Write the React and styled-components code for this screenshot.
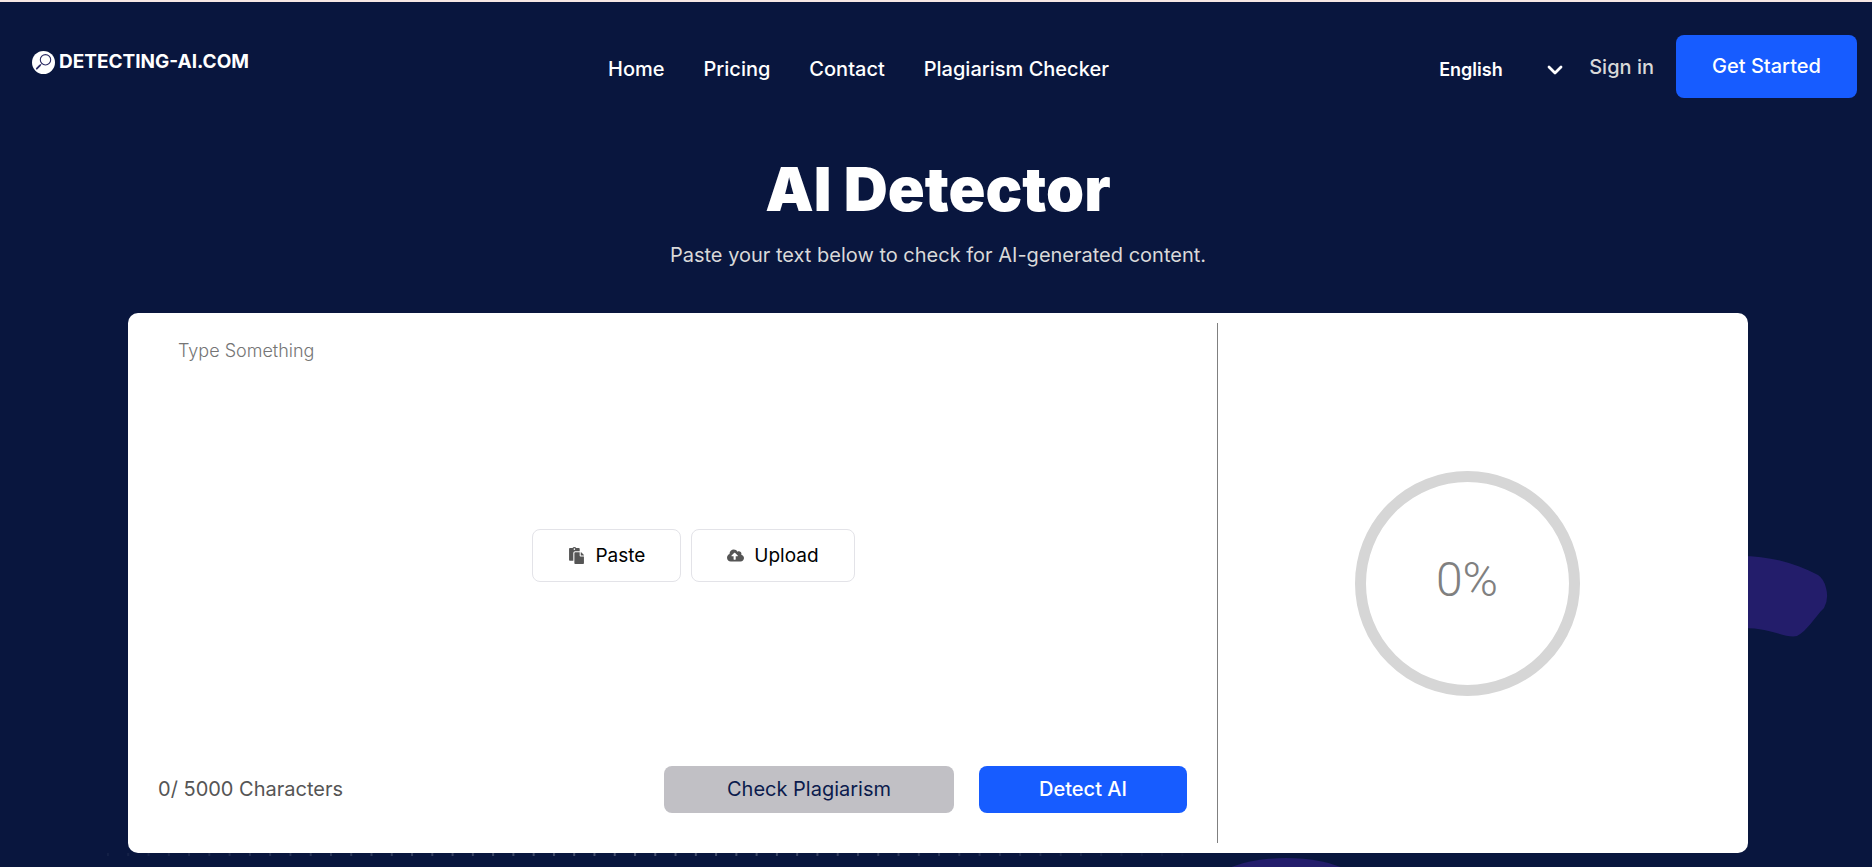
import React, { useState } from "react";
import styled, { createGlobalStyle } from "styled-components";
import { FaPaste, FaCloudUploadAlt } from "react-icons/fa";

const GlobalStyle = createGlobalStyle`
  *, *::before, *::after { box-sizing: border-box; }
  body {
    margin: 0;
    background: #09163e;
    font-family: Inter, "Liberation Sans", sans-serif;
    color: #fff;
  }
`;

const Page = styled.div`
  position: relative;
  min-height: 100vh;
  overflow: hidden;
  border-top: 2px solid #f6e7e4;
  background: #09163e;
`;

const Backdrop = styled.svg`
  position: absolute;
  top: 0;
  right: 0;
  width: 1872px;
  height: 865px;
`;

const Header = styled.header`
  position: relative;
  display: grid;
  grid-template-columns: 576px 1fr auto;
  align-items: start;
  padding: 33px 15px 0 32px;
  height: 96px;
`;

const Logo = styled.a`
  display: flex;
  align-items: center;
  gap: 4px;
  margin-top: 15px;
  justify-self: start;
  color: #fff;
  font-size: 19px;
  font-weight: 700;
  line-height: 24px;
  text-decoration: none;
  white-space: nowrap;
`;

const Nav = styled.nav`
  display: flex;
  gap: 39px;
  margin-top: 22px;
`;

const NavLink = styled.a`
  color: ${(p) => (p.$muted ? "#d9d9d9" : "#fff")};
  font-size: 20px;
  font-weight: 500;
  line-height: 24px;
  text-decoration: none;
  white-space: nowrap;
`;

const Account = styled.div`
  display: flex;
  align-items: center;
  gap: 22px;
`;

const Language = styled.label`
  display: flex;
  align-items: center;
  width: 124px;
  margin: 6px 4px 0 0;
`;

const LanguageSelect = styled.select`
  flex: 1;
  min-width: 0;
  padding: 0;
  appearance: none;
  border: 0;
  background: transparent;
  color: #fff;
  font: 600 18px/24px Inter, sans-serif;
`;

const Button = styled.button`
  display: flex;
  align-items: center;
  justify-content: center;
  width: ${(p) => p.$width}px;
  height: ${(p) => p.$height}px;
  padding: 0 0 2px;
  border: 0;
  border-radius: 8px;
  background: ${(p) => (p.$quiet ? "#c1c0c5" : "#175cff")};
  color: ${(p) => (p.$quiet ? "#0b1b4d" : "#fff")};
  font: ${(p) => (p.$quiet ? 400 : 500)} 20px/24px Inter, sans-serif;
  white-space: nowrap;
`;

const Main = styled.main`
  position: relative;
  padding: 0 124px 12px 128px;
`;

const Title = styled.h1`
  margin: 55px 0 0;
  font-size: 61px;
  font-weight: 900;
  line-height: 72px;
  text-align: center;
`;

const Subtitle = styled.p`
  margin: 16px 0 44px;
  color: #d9d9d9;
  font-size: 20px;
  line-height: 28px;
  text-align: center;
`;

const Card = styled.section`
  display: grid;
  grid-template-columns: 1090px 1fr;
  padding: 10px 0;
  height: 540px;
  border-radius: 10px;
  background: #fff;
`;

const Editor = styled.div`
  display: flex;
  flex-direction: column;
  padding: 10px 30px 30px;
  border-right: 1px solid #808080;
`;

const TextInput = styled.textarea`
  display: block;
  height: 60px;
  padding: 6px 20px;
  border: 0;
  outline: 0;
  resize: none;
  background: transparent;
  color: #333;
  font: 300 18px/24px Inter, sans-serif;
  &::placeholder { color: #757575; opacity: 1; }
`;

const Sources = styled.div`
  display: flex;
  flex: 1;
  gap: 10px;
  align-items: center;
  justify-content: center;
  padding: 0 0 48px 42px;
`;

const SourceButton = styled.button`
  display: flex;
  align-items: center;
  gap: 10px;
  height: 53px;
  padding: 0 35px;
  border: 1px solid #e3e3e8;
  border-radius: 8px;
  background: #fff;
  color: #000;
  font: 400 19px/24px Inter, sans-serif;
  svg { color: #555; }
`;

const EditorFooter = styled.div`
  display: flex;
  align-items: center;
  gap: 25px;
`;

const Counter = styled.p`
  flex: 1;
  margin: 0;
  padding-bottom: 2px;
  color: #555;
  font-size: 20px;
  line-height: 24px;
`;

const Result = styled.div`
  display: flex;
  align-items: center;
  justify-content: center;
  padding-right: 32px;
`;

const Gauge = styled.div`
  display: flex;
  align-items: center;
  justify-content: center;
  width: 225px;
  height: 225px;
  padding-bottom: 6px;
  border: 11px solid #d6d6d6;
  border-radius: 50%;
  color: #808080;
  font-family: Roboto, sans-serif;
  font-size: 48px;
  font-weight: 300;
  line-height: 56px;
`;

const LIMIT = 5000;
const LINKS = ["Home", "Pricing", "Contact", "Plagiarism Checker"];

function LogoMark() {
  return (
    <svg width="23" height="23" viewBox="0 0 23 23" aria-hidden="true">
      <circle cx="11.5" cy="11.5" r="11.5" fill="#fff" />
      <g fill="none" stroke="#2a2a63" strokeLinecap="round">
        <circle cx="13.5" cy="8.8" r="5.2" strokeWidth="1.1" />
        <path d="M9.5 12.8 8 14.3" strokeWidth="1" />
        <path d="M8 14.4 4.8 17.7" strokeWidth="1.8" />
      </g>
    </svg>
  );
}

function Chevron() {
  return (
    <svg width="16" height="10" viewBox="0 0 16 10" fill="none" stroke="#fff" strokeWidth="2.8" strokeLinecap="round" strokeLinejoin="round" aria-hidden="true">
      <path d="M2 2 8 8 14 2" />
    </svg>
  );
}

function BackdropArt() {
  return (
    <Backdrop viewBox="0 0 1872 865" aria-hidden="true">
      <defs>
        <pattern id="dots" x="107" y="851" width="20.27" height="20" patternUnits="userSpaceOnUse">
          <rect width="2" height="3" fill="#fff" />
        </pattern>
        <linearGradient id="fade">
          <stop offset="0" stopColor="#fff" stopOpacity="0.04" />
          <stop offset="0.5" stopColor="#fff" stopOpacity="0.28" />
          <stop offset="1" stopColor="#fff" stopOpacity="0.02" />
        </linearGradient>
        <mask id="dotMask" maskUnits="userSpaceOnUse" x="100" y="848" width="1090" height="17">
          <rect x="100" y="848" width="1090" height="17" fill="url(#fade)" />
        </mask>
      </defs>
      <rect x="100" y="848" width="1090" height="17" fill="url(#dots)" mask="url(#dotMask)" />
      <path d="M1740 554C1772 554 1797 562 1818 573Q1824 577 1826 586Q1829 597 1824 606C1814 616 1807 629 1797 634C1786 637 1770 625 1740 626Z" fill="#231d6b" />
      <ellipse cx="1286" cy="900" rx="90" ry="44" fill="#231d6b" />
    </Backdrop>
  );
}

export default function App() {
  const [text, setText] = useState("");
  return (
    <>
      <GlobalStyle />
      <Page>
        <BackdropArt />
        <Header>
          <Logo href="#">
            <LogoMark />
            DETECTING-AI.COM
          </Logo>
          <Nav>
            {LINKS.map((name) => (
              <NavLink key={name} href="#">{name}</NavLink>
            ))}
          </Nav>
          <Account>
            <Language>
              <LanguageSelect aria-label="Language" defaultValue="English">
                <option>English</option>
              </LanguageSelect>
              <Chevron />
            </Language>
            <NavLink href="#" $muted>Sign in</NavLink>
            <Button type="button" $width={181} $height={63}>Get Started</Button>
          </Account>
        </Header>
        <Main>
          <Title>AI Detector</Title>
          <Subtitle>Paste your text below to check for AI-generated content.</Subtitle>
          <Card>
            <Editor>
              <TextInput
                aria-label="Text to check"
                placeholder="Type Something"
                maxLength={LIMIT}
                value={text}
                onChange={(e) => setText(e.target.value)}
              />
              <Sources>
                <SourceButton type="button"><FaPaste size={17} />Paste</SourceButton>
                <SourceButton type="button"><FaCloudUploadAlt size={17} />Upload</SourceButton>
              </Sources>
              <EditorFooter>
                <Counter>{text.length}/ {LIMIT} Characters</Counter>
                <Button type="button" $width={290} $height={47} $quiet>Check Plagiarism</Button>
                <Button type="button" $width={208} $height={47}>Detect AI</Button>
              </EditorFooter>
            </Editor>
            <Result>
              <Gauge>0%</Gauge>
            </Result>
          </Card>
        </Main>
      </Page>
    </>
  );
}
